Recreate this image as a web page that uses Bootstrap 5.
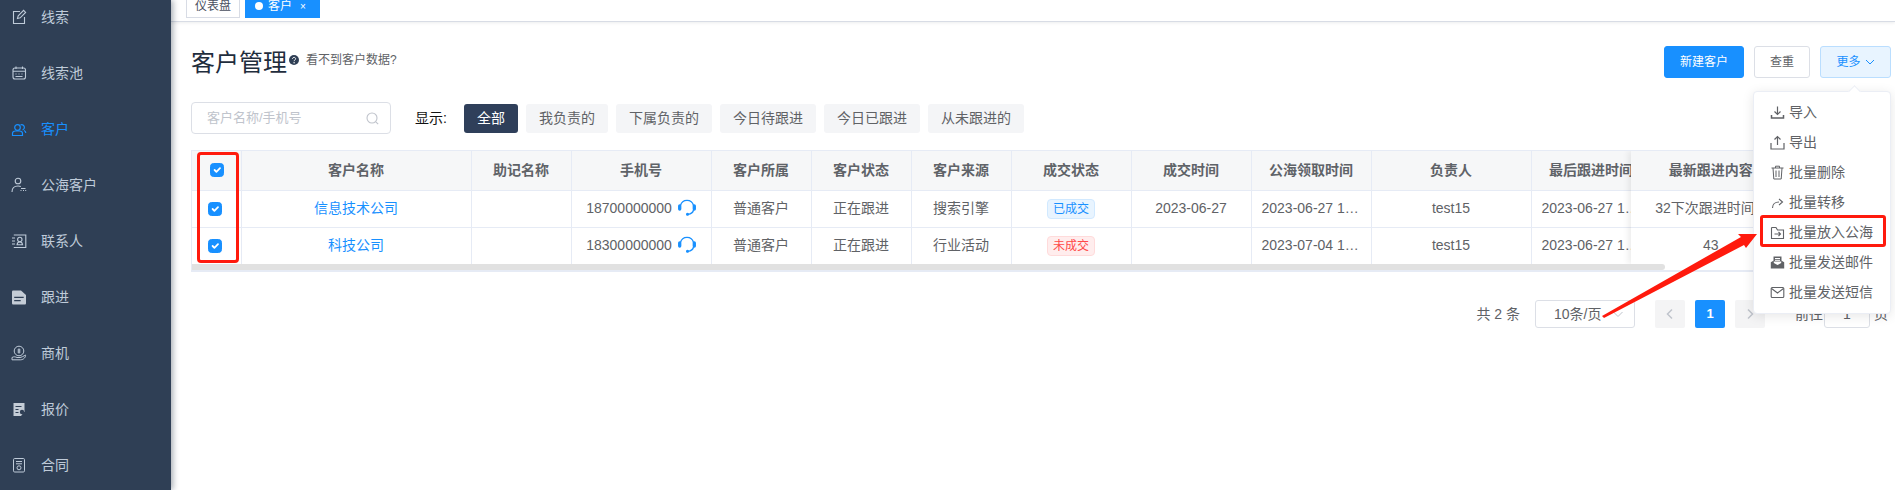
<!DOCTYPE html>
<html lang="zh-CN">
<head>
<meta charset="utf-8">
<title>客户管理</title>
<link href="https://cdn.jsdelivr.net/npm/bootstrap@5.3.0/dist/css/bootstrap.min.css" rel="stylesheet">
<style>
html,body{height:100%;margin:0;overflow:hidden}
body{font-family:"Liberation Sans","Noto Sans CJK SC",sans-serif;font-size:14px;color:#606266;background:#fff}
.app-shell{height:490px}
.side-nav{width:171px;flex:none;background:#2f3f55;box-shadow:2px 0 6px rgba(0,21,41,.35);position:relative;z-index:3;overflow:hidden}
.side-list{margin-top:-11px}
.side-item{height:56px;padding-left:11px;color:#bfcbd9;font-size:14px;gap:14px}
.side-item svg{width:16px;height:16px;flex:none}
.side-item.is-on{color:#1890ff}
.main-pane{min-width:0;width:1724px;position:relative}
.tag-bar{height:22px;padding-left:15px;border-bottom:1px solid #d8dce5;box-shadow:0 1px 3px rgba(0,21,41,.08);gap:5px}
.view-tag{height:18px;line-height:13px;font-size:12px;border:1px solid #d8dce5;border-top:0;padding:0 8px;color:#495060;background:#fff}
.view-tag.is-on{background:#1890ff;border-color:#1890ff;color:#fff;width:75px;padding-left:9px}
.view-dot{width:8px;height:8px;border-radius:50%;background:#fff;margin-right:5px;display:inline-block}
.view-x{font-size:10px;margin-left:8px}
.page-body{padding:24px 4px 0 20px}
.title-row{height:32px}
.title-group{padding-top:1px}
.page-title{font-size:24px;line-height:32px;color:#1f2d3d;font-weight:400;margin:0}
.help-dot{width:10px;height:10px;margin:0 7px 0 2px;position:relative;top:-3px}
.help-text{font-size:12px;color:#606266;position:relative;top:-3px}
.act-row{gap:10px}
.act-btn{height:32px;font-size:12px;padding:0;border-radius:3px;display:inline-flex;align-items:center;justify-content:center}
.act-new{width:80px;background:#1890ff;border:1px solid #1890ff;color:#fff}
.act-dup{width:56px;background:#fff;border:1px solid #dcdfe6;color:#606266}
.act-more{width:71px;background:#e8f4ff;border:1px solid #badeff;color:#1890ff}
.filter-row{margin-top:24px}
.search-box{width:200px;height:32px;border:1px solid #dcdfe6;border-radius:4px;padding:0 11px 0 15px;color:#c0c4cc;font-size:13px}
.filter-label{color:#111;margin:6px 17px 0 24px}
.filter-btn{height:29px;margin-top:2px;border-radius:3px;background:#f4f5f7;color:#606266;border:0;font-size:14px;padding:0 13px;margin-right:8px}
.filter-btn.is-on{background:#2f3f5a;color:#fff}
.grid-wrap{margin-top:16px;width:1699px;height:122px;position:relative;overflow:hidden;border-top:1px solid #e6ebf5;border-left:1px solid #e6ebf5}
.data-grid{table-layout:fixed;margin:0;border-collapse:collapse;color:#606266;font-size:14px}
.data-grid th,.data-grid td{padding:0 10px;text-align:center;border:0;border-right:1px solid #e6ebf5;border-bottom:1px solid #e6ebf5;white-space:nowrap;overflow:hidden;text-overflow:ellipsis;color:#606266;background:#fff;vertical-align:middle;box-shadow:none}
.data-grid th{height:39px;background:#f6f7f8;font-weight:700;color:#5f6368}
.data-grid td{height:37px}
.data-grid .chk-head{text-align:left;padding-left:18px}
.data-grid .chk-cell{text-align:left;padding-left:16px}
.grid-chk{width:14px;height:14px;margin:0;display:block;border-radius:2px;background-color:#1890ff!important;border-color:#1890ff!important}
.co-link{color:#1890ff;text-decoration:none}
.phone-ic{width:18px;height:18px;vertical-align:-3px;margin-left:2px}
.deal-tag{font-size:12px;font-weight:400;padding:0;width:48px;height:20px;line-height:18px;border-radius:4px;display:inline-block;border:1px solid}
.deal-yes{background:#e8f4ff;border-color:#d1e9ff;color:#1890ff}
.deal-no{background:#ffeded;border-color:#ffdbdb;color:#ff4949}
.scroll-track{position:absolute;left:0;right:0;top:113px;height:8px;background:#fff;border-bottom:2px solid #e6ebf5}
.scroll-thumb{position:absolute;left:0;top:0;height:6px;width:1473px;background:#e1e1e1;border-radius:0 4px 4px 0}
.fixed-pane{position:absolute;left:1439px;top:0;width:260px;height:113px;box-shadow:-3px 0 6px rgba(0,0,0,.07);background:#fff}
.mark-box{position:absolute;left:5px;top:1px;width:42px;height:111px;border:3px solid #ff1a0d;border-radius:4px;pointer-events:none}
.pager-row{margin-top:28px;padding-right:3px;height:28px}
.page-size{width:100px;height:28px;border:1px solid #dcdfe6;border-radius:3px;padding:0 10px 0 18px;color:#606266;margin:0 20px 0 15px}
.page-nav{width:30px;height:28px;background:#f4f4f5;border-radius:2px;color:#c0c4cc;margin-right:10px}
.page-num{background:#1890ff;color:#fff;font-weight:700;font-size:13px}
.page-jump{margin-left:20px}
.page-input{width:46px;height:28px;border:1px solid #dcdfe6;border-radius:3px;margin:0 4px 0 1px;text-align:center}
.more-menu{position:absolute;left:1582px;top:91px;width:138px;height:223px;background:#fff;border:1px solid #ebeef5;border-radius:4px;box-shadow:0 2px 12px rgba(0,0,0,.1);padding:5px 0;z-index:5}
.more-menu::before{content:"";position:absolute;top:-5px;left:96px;width:9px;height:9px;background:#fff;border-left:1px solid #ebeef5;border-top:1px solid #ebeef5;transform:rotate(45deg)}
.more-item{height:30px;padding-left:16px;gap:4px;color:#606266;font-size:14px}
.more-item svg{width:15px;height:15px;flex:none}
.menu-mark{position:absolute;left:1589px;top:215px;width:126px;height:32px;border:3px solid #ff1a0d;border-radius:3px;z-index:6}
.menu-arrow{position:absolute;left:1430px;top:230px;width:160px;height:90px;z-index:6;overflow:visible}
</style>
</head>
<body>
<div class="d-flex app-shell">
  <aside class="side-nav">
    <div class="side-list d-flex flex-column">
      <div class="side-item d-flex align-items-center">
        <svg viewBox="0 0 16 16" fill="none" stroke="currentColor" stroke-width="1.1"><path d="M9 2.500H2.500v12h11V8"/><path d="M6.500 9.500l.7-2.600L12.600 1.400l2 2-5.400 5.400z"/></svg>线索</div>
      <div class="side-item d-flex align-items-center">
        <svg viewBox="0 0 16 16" fill="none" stroke="currentColor" stroke-width="1.1"><rect x="2" y="3" width="12.500" height="11" rx="2"/><path d="M2 6.300h12.500M5 1.600v2.400M11.500 1.600v2.400"/><path d="M4.500 9h1M7.500 9h1M10.500 9h1M4.500 11.500h7" stroke-width="1.2"/></svg>线索池</div>
      <div class="side-item is-on d-flex align-items-center">
        <svg viewBox="0 0 16 16" fill="none" stroke="currentColor" stroke-width="1.2"><circle cx="6.500" cy="6.500" r="2.800"/><path d="M1.500 14.500v-2c0-1.500 1.500-2.500 3-2.500h4c1.500 0 3 1 3 2.500v2z"/><path d="M9.500 4a2.700 2.700 0 1 1 2 5M13 9.500c1 .5 1.800 1.300 1.800 2.500"/></svg>客户</div>
      <div class="side-item d-flex align-items-center">
        <svg viewBox="0 0 16 16" fill="none" stroke="currentColor" stroke-width="1.1"><circle cx="7" cy="4" r="2.800"/><path d="M1 15c0-4 2.500-6 6-6 1 0 2 .2 2.800.6"/><path d="M9.500 13.500h1M12 13.500h1M14.200 13.500h1M10 11.500h4.500" stroke-width="1.200"/></svg>公海客户</div>
      <div class="side-item d-flex align-items-center">
        <svg viewBox="0 0 16 16" fill="none" stroke="currentColor" stroke-width="1.1"><path d="M2.800 2h12v12.500h-12"/><path d="M1 5h3M1 8h3M1 11h3"/><circle cx="8.800" cy="6.500" r="2.200"/><path d="M5.500 11.800h6.600M6.200 11.500c0-1.500 1-2.500 2.600-2.500s2.600 1 2.600 2.500"/></svg>联系人</div>
      <div class="side-item d-flex align-items-center">
        <svg viewBox="0 0 16 16" fill="#c4ccd6"><path d="M1 2.800C1 2 1.600 1.500 2.300 1.500H10l5 4.500v8.200c0 .7-.6 1.300-1.300 1.300H2.300C1.600 15.500 1 14.900 1 14.200z"/><path d="M3.200 7.800h9.500v1.200H3.200zM3.200 11h6.500v1.200H3.200z" fill="#2f3f55"/></svg>跟进</div>
      <div class="side-item d-flex align-items-center">
        <svg viewBox="0 0 16 16" fill="none" stroke="currentColor" stroke-width="1"><circle cx="8" cy="6" r="4.800"/><path d="M8 3.500v5M6.500 5h3M6.500 7h3" stroke-width="1.200"/><path d="M1 12.500c2-1.200 3.500-.6 5 0h3c1 0 4-1.500 5.500-2.500 .5 1.500-1.500 4.800-5 4.800H1z"/></svg>商机</div>
      <div class="side-item d-flex align-items-center">
        <svg viewBox="0 0 16 16" fill="#c4ccd6"><path d="M2.500 2h11v8.500L10 15H2.500z"/><path d="M4.500 5h6v1h-6zM4.500 8h3v1h-3zM4.500 11h3v1h-3z" fill="#2f3f55"/><circle cx="11" cy="11" r="2.200" fill="#2f3f55"/></svg>报价</div>
      <div class="side-item d-flex align-items-center">
        <svg viewBox="0 0 16 16" fill="none" stroke="currentColor" stroke-width="1"><rect x="2.500" y="1.500" width="11" height="13.500" rx="1.200"/><path d="M5 4.500h6M5 6.800h6"/><circle cx="8" cy="10.800" r="2"/></svg>合同</div>
    </div>
  </aside>
  <main class="main-pane">
    <div class="tag-bar d-flex">
      <div class="view-tag">仪表盘</div>
      <div class="view-tag is-on"><span class="view-dot"></span>客户<span class="view-x">×</span></div>
    </div>
    <div class="page-body">
      <div class="title-row d-flex justify-content-between align-items-start">
        <div class="title-group d-flex align-items-center">
          <h1 class="page-title">客户管理</h1>
          <svg class="help-dot" viewBox="0 0 10 10"><circle cx="5" cy="5" r="5" fill="#2f3f55"/><path d="M3.500 3.900c0-2 3.100-2 3.100-.1 0 1.200-1.500 1.100-1.500 2.400" fill="none" stroke="#fff" stroke-width="1"/><circle cx="5.100" cy="7.800" r=".7" fill="#fff"/></svg>
          <span class="help-text">看不到客户数据?</span>
        </div>
        <div class="act-row d-flex">
          <button class="btn act-btn act-new" type="button">新建客户</button>
          <button class="btn act-btn act-dup" type="button">查重</button>
          <button class="btn act-btn act-more" type="button">更多
            <svg width="10" height="10" viewBox="0 0 10 10" class="ms-1"><path d="M1 3l4 4 4-4" fill="none" stroke="currentColor"/></svg></button>
        </div>
      </div>
      <div class="filter-row d-flex align-items-start">
        <div class="search-box d-flex align-items-center justify-content-between">
          <span>客户名称/手机号</span>
          <svg width="13" height="13" viewBox="0 0 13 13" fill="none" stroke="#c0c4cc" stroke-width="1.100"><circle cx="6" cy="6" r="5"/><path d="M9.800 9.800l2.400 2.400"/></svg>
        </div>
        <span class="filter-label">显示:</span>
        <button class="filter-btn is-on" type="button">全部</button>
        <button class="filter-btn" type="button">我负责的</button>
        <button class="filter-btn" type="button">下属负责的</button>
        <button class="filter-btn" type="button">今日待跟进</button>
        <button class="filter-btn" type="button">今日已跟进</button>
        <button class="filter-btn" type="button">从未跟进的</button>
      </div>
      <div class="grid-wrap">
        <table class="table data-grid" style="width:1459px">
          <colgroup>
            <col style="width:49px"><col style="width:230px"><col style="width:100px"><col style="width:140px"><col style="width:100px"><col style="width:100px"><col style="width:100px"><col style="width:120px"><col style="width:120px"><col style="width:120px"><col style="width:160px"><col style="width:120px">
          </colgroup>
          <thead>
            <tr><th class="chk-head"><input class="form-check-input grid-chk" type="checkbox" checked></th><th>客户名称</th><th>助记名称</th><th>手机号</th><th>客户所属</th><th>客户状态</th><th>客户来源</th><th>成交状态</th><th>成交时间</th><th>公海领取时间</th><th>负责人</th><th>最后跟进时间</th></tr>
          </thead>
          <tbody>
            <tr><td class="chk-cell"><input class="form-check-input grid-chk" type="checkbox" checked></td><td><a class="co-link" href="#">信息技术公司</a></td><td></td><td>18700000000 <svg class="phone-ic" viewBox="0 0 18 18" fill="none" stroke="#1890ff" stroke-width="1.300"><path d="M2.500 7.500a6.700 6.700 0 0 1 13 0"/><path d="M15.500 12c-.5 2.500-2.500 4-5.500 4.300"/><rect x=".7" y="7" width="2" height="5" rx="1" fill="#1890ff"/><rect x="15.300" y="7" width="2" height="5" rx="1" fill="#1890ff"/><circle cx="9.500" cy="16.300" r=".9" fill="#1890ff"/></svg></td><td>普通客户</td><td>正在跟进</td><td>搜索引擎</td><td><span class="badge deal-tag deal-yes">已成交</span></td><td>2023-06-27</td><td>2023-06-27 15:32:10</td><td>test15</td><td>2023-06-27 15:32:10</td></tr>
            <tr><td class="chk-cell"><input class="form-check-input grid-chk" type="checkbox" checked></td><td><a class="co-link" href="#">科技公司</a></td><td></td><td>18300000000 <svg class="phone-ic" viewBox="0 0 18 18" fill="none" stroke="#1890ff" stroke-width="1.300"><path d="M2.500 7.500a6.700 6.700 0 0 1 13 0"/><path d="M15.500 12c-.5 2.500-2.500 4-5.500 4.300"/><rect x=".7" y="7" width="2" height="5" rx="1" fill="#1890ff"/><rect x="15.300" y="7" width="2" height="5" rx="1" fill="#1890ff"/><circle cx="9.500" cy="16.300" r=".9" fill="#1890ff"/></svg></td><td>普通客户</td><td>正在跟进</td><td>行业活动</td><td><span class="badge deal-tag deal-no">未成交</span></td><td></td><td>2023-07-04 10:20:11</td><td>test15</td><td>2023-06-27 15:32:10</td></tr>
          </tbody>
        </table>
        <div class="fixed-pane">
          <table class="table data-grid" style="width:260px">
            <colgroup><col style="width:160px"><col style="width:100px"></colgroup>
            <thead><tr><th>最新跟进内容</th><th>操作</th></tr></thead>
            <tbody>
              <tr><td>32下次跟进时间:1</td><td></td></tr>
              <tr><td>43</td><td></td></tr>
            </tbody>
          </table>
        </div>
        <div class="scroll-track"><div class="scroll-thumb"></div></div>
        <div class="mark-box"></div>
      </div>
      <div class="pager-row d-flex justify-content-end align-items-center">
        <span>共 2 条</span>
        <div class="page-size d-flex align-items-center justify-content-between">
          <span>10条/页</span>
          <svg width="12" height="12" viewBox="0 0 12 12"><path d="M1.500 4l4.500 4.500L10.500 4" fill="none" stroke="#c0c4cc"/></svg>
        </div>
        <div class="page-nav d-flex align-items-center justify-content-center"><svg width="10" height="12" viewBox="0 0 10 12"><path d="M7 1.500L2.500 6 7 10.500" fill="none" stroke="#c0c4cc" stroke-width="1.500"/></svg></div>
        <div class="page-nav page-num d-flex align-items-center justify-content-center">1</div>
        <div class="page-nav d-flex align-items-center justify-content-center"><svg width="10" height="12" viewBox="0 0 10 12"><path d="M3 1.500L7.500 6 3 10.500" fill="none" stroke="#c0c4cc" stroke-width="1.500"/></svg></div>
        <span class="page-jump">前往</span>
        <div class="page-input d-flex align-items-center justify-content-center">1</div>
        <span>页</span>
      </div>
    </div>
    <div class="more-menu">
      <div class="more-item d-flex align-items-center"><svg viewBox="0 0 15 15" fill="none" stroke="#606266" stroke-width="1.200"><path d="M7.500 1.500v7.500M4.500 6.500l3 3 3-3" /><path d="M1.500 10v3h12v-3" stroke-width="1.500"/></svg>导入</div>
      <div class="more-item d-flex align-items-center"><svg viewBox="0 0 15 15" fill="none" stroke="#606266" stroke-width="1.200"><path d="M7.500 10V1.500M4.500 4.500l3-3 3 3"/><path d="M1 8v6h13V8"/></svg>导出</div>
      <div class="more-item d-flex align-items-center"><svg viewBox="0 0 15 15" fill="none" stroke="#606266" stroke-width="1"><path d="M1.500 3h12M5.500 3V1.200h4V3M3 3l.8 11h7.400L12 3M6 5.500v6.500M9 5.500v6.500"/></svg>批量删除</div>
      <div class="more-item d-flex align-items-center"><svg viewBox="0 0 15 15" fill="none" stroke="#606266" stroke-width="1.100"><path d="M2.500 13c0-3.500 2.500-6 6.500-6M9 4l3.500 3L9 10"/></svg>批量转移</div>
      <div class="more-item d-flex align-items-center"><svg viewBox="0 0 15 15" fill="none" stroke="#606266" stroke-width="1.100"><path d="M1.500 3v10.500h12V5H7.500L6 2.500H2z"/><path d="M4.500 9h6M8.500 7l2 2-2 2"/></svg>批量放入公海</div>
      <div class="more-item d-flex align-items-center"><svg viewBox="0 0 15 15" fill="#606266"><path d="M3.500 1.500h8v5h-8z"/><path d="M.8 7.200l3-1.700v2.500l3.700 2 3.700-2V5.500l3 1.700v6.300H.8z"/><path d="M5 3.500h5M5 5.300h5" stroke="#fff"/></svg>批量发送邮件</div>
      <div class="more-item d-flex align-items-center"><svg viewBox="0 0 15 15" fill="none" stroke="#606266" stroke-width="1.100"><rect x="1.200" y="2.500" width="12.600" height="10" rx="1"/><path d="M1.500 3.500l6 4.500 6-4.500"/></svg>批量发送短信</div>
    </div>
    <div class="menu-mark"></div>
    <svg class="menu-arrow" viewBox="0 0 160 90"><polygon points="1,86 140,7 137,4 156,4 145,18 143,15 3,88" fill="#ff1a0d"/></svg>
  </main>
</div>
<script src="https://cdn.jsdelivr.net/npm/bootstrap@5.3.0/dist/js/bootstrap.bundle.min.js"></script>
</body>
</html>
